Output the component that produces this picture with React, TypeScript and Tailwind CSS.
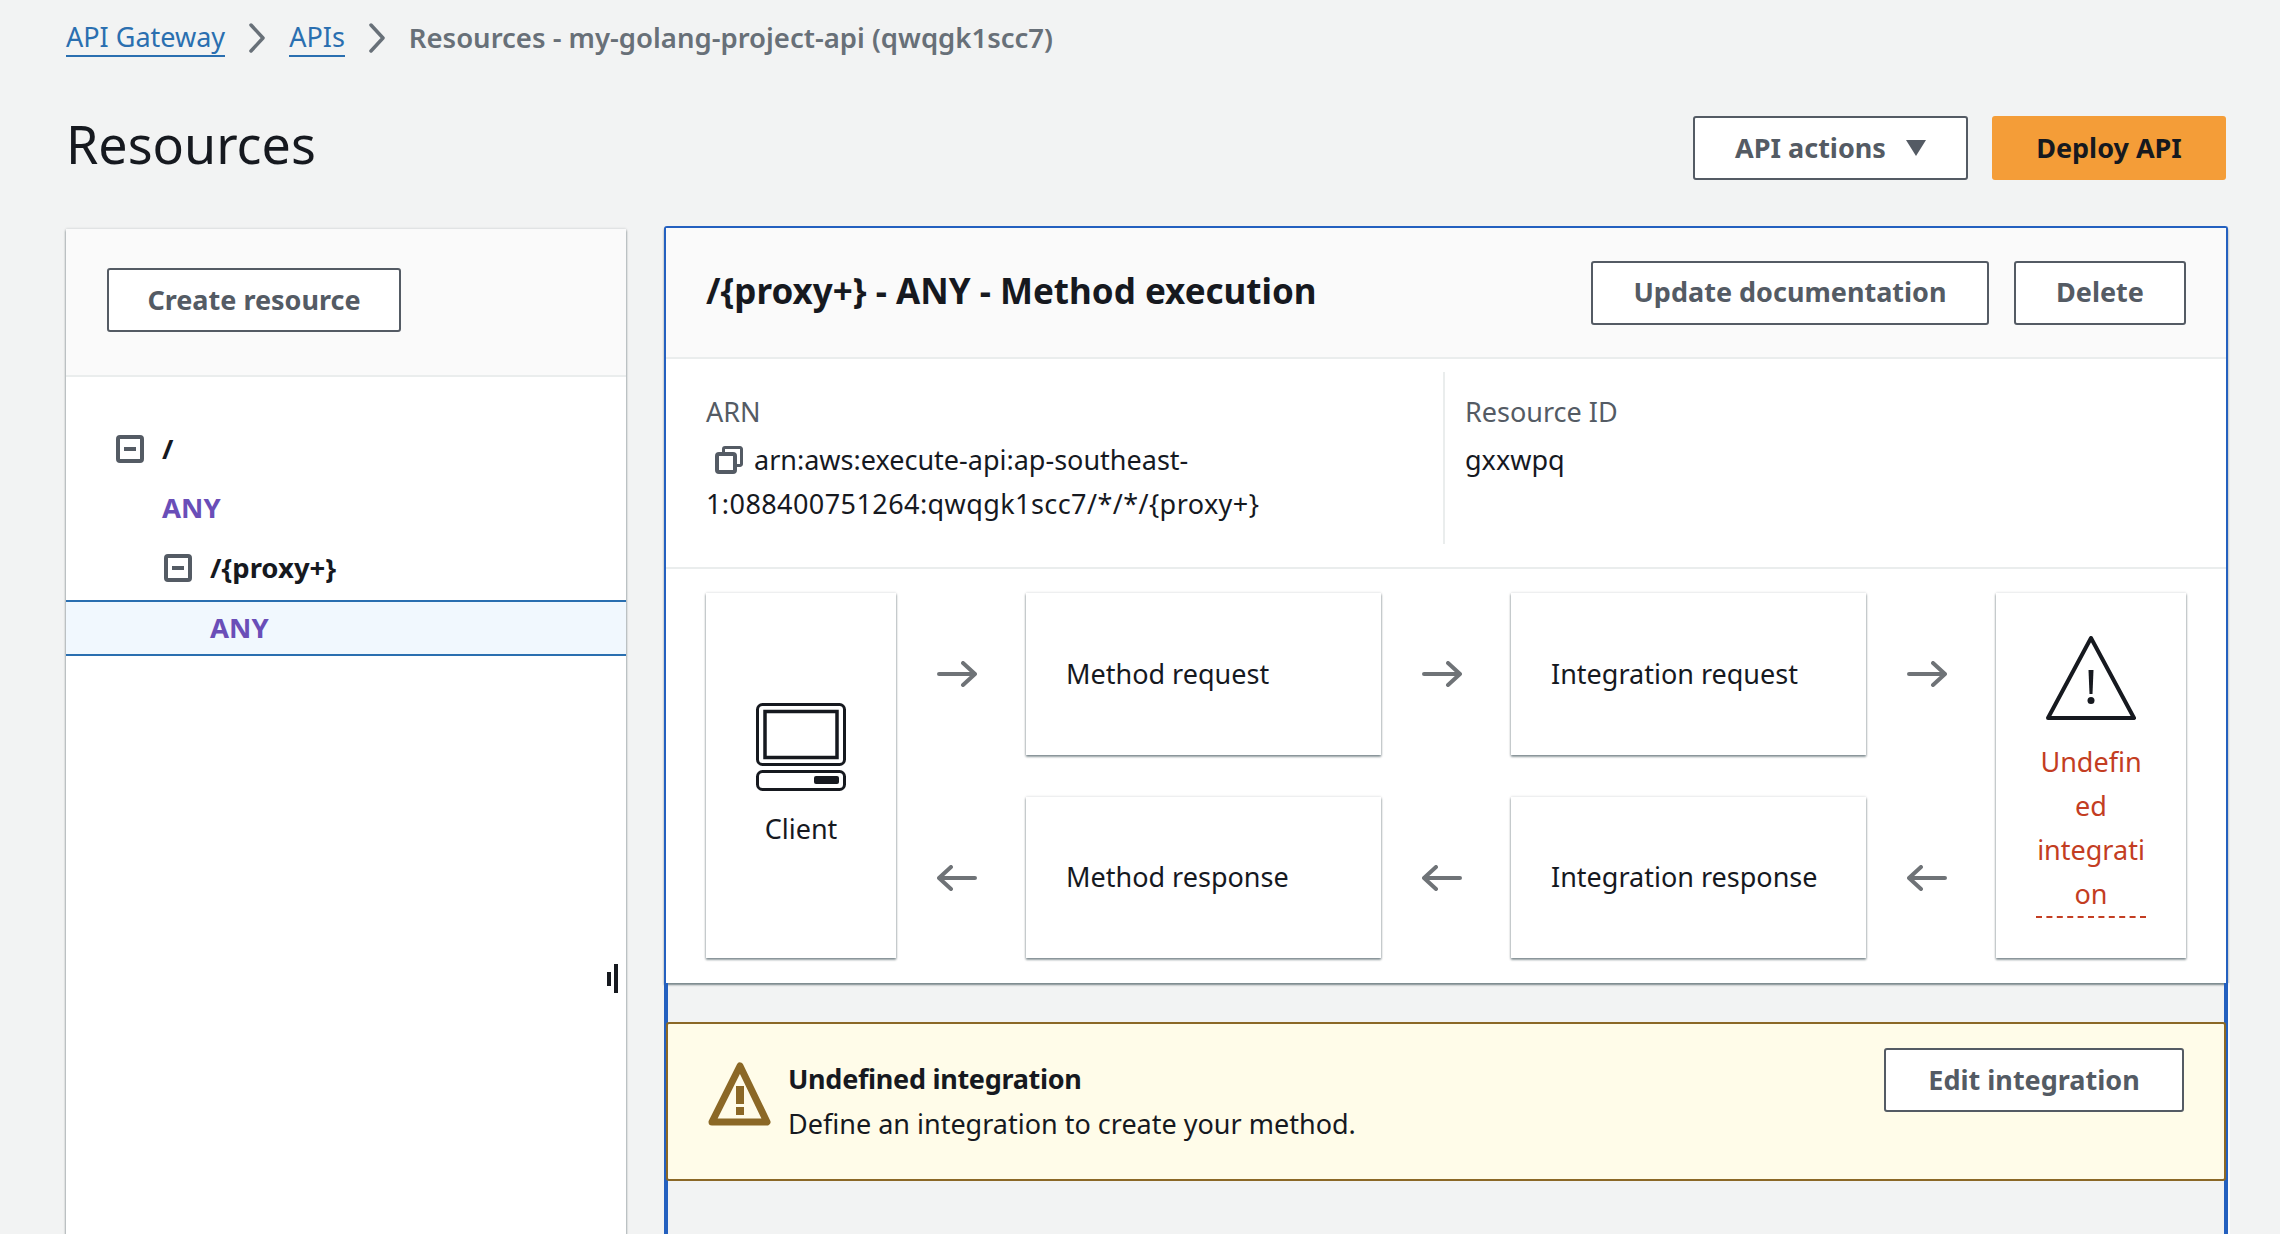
const font = "font-['Noto_Sans',sans-serif]";
const cardShadow =
  "shadow-[0_2px_2px_0_rgba(0,28,36,0.35),1px_1px_2px_0_rgba(0,28,36,0.15),-1px_1px_2px_0_rgba(0,28,36,0.15),0_-1px_2px_0_rgba(0,28,36,0.08)]";

function Button({ label, className = "" }: { label: string; className?: string }) {
  return (
    <button className={`flex h-[64px] items-center justify-center rounded-[3px] border-2 border-[#545b64] bg-white text-[27px] font-bold text-[#545b64] ${className}`}>
      {label}
    </button>
  );
}

function Chevron() {
  return (
    <svg width="18" height="30" viewBox="0 0 18 30" fill="none" stroke="#687078" strokeWidth="3.5" strokeLinecap="round" strokeLinejoin="round">
      <path d="M3 2l12 13L3 28" />
    </svg>
  );
}

function MinusBox() {
  return (
    <svg width="28" height="28" viewBox="0 0 28 28" className="shrink-0">
      <rect x="2" y="2" width="24" height="24" rx="2" fill="none" stroke="#545b64" strokeWidth="4" />
      <rect x="8" y="12" width="12" height="4" fill="#545b64" />
    </svg>
  );
}

function Arrow({ left = false }: { left?: boolean }) {
  return (
    <div className="flex items-center pl-[41px]">
      <svg width="40" height="26" viewBox="0 0 40 26" fill="none" stroke="#6f7377" strokeWidth="4" strokeLinecap="round" strokeLinejoin="round">
        {left ? <path d="M38 13H2M14 2L2 13l12 11" /> : <path d="M2 13h36M26 2l12 11-12 11" />}
      </svg>
    </div>
  );
}

function StepCard({ label }: { label: string }) {
  return (
    <div className={`flex items-center bg-white pl-[40px] text-[27px] text-[#16191f] ${cardShadow}`}>
      {label}
    </div>
  );
}

function CopyIcon() {
  return (
    <svg width="28" height="28" viewBox="0 0 28 28" fill="none" stroke="#545b64" className="ml-[9px] mr-[11px] inline-block align-[-4px]">
      <rect x="2" y="8" width="18" height="18" rx="2" strokeWidth="4" />
      <path d="M8.5 6V3a1.5 1.5 0 0 1 1.5-1.5h15A1.5 1.5 0 0 1 26.5 3v15a1.5 1.5 0 0 1-1.5 1.5h-3" strokeWidth="3" />
    </svg>
  );
}

function ComputerIcon() {
  return (
    <svg width="90" height="88" viewBox="0 0 90 88" fill="none" stroke="#16191f">
      <rect x="1.5" y="1.5" width="87" height="60" rx="5" strokeWidth="3" />
      <rect x="9" y="8.5" width="72" height="46" strokeWidth="3.5" />
      <rect x="1.5" y="68.5" width="87" height="18" rx="5" strokeWidth="3" />
      <rect x="58" y="73" width="25" height="8" rx="2" fill="#16191f" stroke="none" />
    </svg>
  );
}

function WarningOutline() {
  return (
    <svg width="90" height="84" viewBox="0 0 90 84" fill="none">
      <path d="M45 2L88 82H2Z" stroke="#16191f" strokeWidth="4" strokeLinejoin="round" />
      <path d="M42.5 34h5L46.5 58h-3Z" fill="#16191f" />
      <circle cx="45" cy="64.5" r="3.5" fill="#16191f" />
    </svg>
  );
}

function WarningSolid() {
  return (
    <svg width="63" height="64" viewBox="0 0 63 64" fill="none" className="shrink-0">
      <path d="M32 4L59 60H4Z" stroke="#8b6826" strokeWidth="7" strokeLinejoin="round" />
      <rect x="28" y="24" width="8" height="18" fill="#8b6826" />
      <rect x="28" y="45" width="8" height="8" fill="#8b6826" />
    </svg>
  );
}

function TreePanel() {
  return (
    <aside className={`mt-[3px] h-[1100px] w-[560px] shrink-0 bg-white ${cardShadow}`}>
      <div className="h-[148px] border-b-2 border-[#eaeded] bg-[#fafafa] pl-[41px] pt-[39px]">
        <Button label="Create resource" className="w-[294px]" />
      </div>
      <div className="relative h-[952px] pt-[58px]">
        <div className="flex h-[28px] items-center gap-[18px] pl-[50px] text-[27.5px] font-bold text-[#16191f]">
          <MinusBox />
          /
        </div>
        <div className="mt-[31px] h-[28px] pl-[96px] text-[27.5px] font-bold leading-[28px] text-[#6a4eb8]">ANY</div>
        <div className="mt-[32px] flex h-[28px] items-center gap-[18px] pl-[98px] text-[27.5px] font-bold text-[#16191f]">
          <MinusBox />
          {"/{proxy+}"}
        </div>
        <div className="mt-[18px] flex h-[56px] items-center border-y-2 border-[#2a6fb0] bg-[#f1f8fe] pl-[144px] text-[27.5px] font-bold text-[#6a4eb8]">
          ANY
        </div>
        <div className="absolute left-[541px] top-[595px] h-[14px] w-[4px] bg-[#16191f]" />
        <div className="absolute left-[548px] top-[587px] h-[29px] w-[4px] bg-[#16191f]" />
      </div>
    </aside>
  );
}

function MethodPanel() {
  return (
    <section className="flex w-[1564px] shrink-0 flex-col">
      <div className="rounded-t-[3px] border-x-2 border-t-2 border-[#2460bf] bg-white shadow-[0_2px_2px_0_rgba(0,28,36,0.5)]">
        <div className="flex h-[131px] items-center justify-between border-b-2 border-[#eaeded] bg-[#fafafa] pl-[40px] pr-[40px]">
          <h2 className="-mt-[3px] text-[35px] font-bold text-[#16191f]">{"/{proxy+} - ANY - Method execution"}</h2>
          <div className="flex gap-[25px]">
            <Button label="Update documentation" className="w-[398px]" />
            <Button label="Delete" className="w-[172px]" />
          </div>
        </div>
        <div className="flex h-[210px] border-b-2 border-[#eaeded] pt-[13px] text-[27px] text-[#16191f]">
          <div className="h-[172px] w-[779px] border-r-2 border-[#eaeded] pl-[40px] pr-[10px] pt-[18px] leading-[44px]">
            <div className="text-[#545b64]">ARN</div>
            <div className="mt-[4px]">
              <CopyIcon />
              arn:aws:execute-api:ap-southeast-
              <span className="tracking-[0.42px]">1:088400751264:qwqgk1scc7/*/*/{"{proxy+}"}</span>
            </div>
          </div>
          <div className="pl-[20px] pt-[18px] leading-[44px]">
            <div className="text-[#545b64]">Resource ID</div>
            <div className="mt-[4px]">gxxwpq</div>
          </div>
        </div>
        <div className="grid grid-cols-[190px_130px_355px_130px_355px_130px_190px] grid-rows-[162px_161px] gap-y-[42px] pb-[25px] pl-[40px] pt-[24px]">
          <div className={`row-span-2 flex flex-col items-center bg-white pt-[110px] text-[27px] text-[#16191f] ${cardShadow}`}>
            <ComputerIcon />
            <div className="mt-[18px]">Client</div>
          </div>
          <Arrow />
          <StepCard label="Method request" />
          <Arrow />
          <StepCard label="Integration request" />
          <Arrow />
          <div className={`row-span-2 flex flex-col items-center bg-white pt-[43px] text-[27px] leading-[44px] text-[#c33d22] ${cardShadow}`}>
            <WarningOutline />
            <div className="mt-[20px] w-[110px] border-b-2 border-dashed border-[#c33d22] text-center wrap-anywhere">
              Undefined integration
            </div>
          </div>
          <Arrow left />
          <StepCard label="Method response" />
          <Arrow left />
          <StepCard label="Integration response" />
          <Arrow left />
        </div>
      </div>
      <div className="flex-1 border-x-4 border-[#2460bf] pt-[39px] shadow-[2px_0_0_0_rgba(255,255,255,0.7)]">
        <div className="-mx-[2px] flex h-[159px] items-start justify-between rounded-[3px] border-2 border-[#8b6826] bg-[#fffce9] pl-[40px] pr-[40px] pt-[24px]">
          <div className="flex gap-[17px] pt-[14px]">
            <WarningSolid />
            <div className="-mt-[6px] text-[27px] leading-[45px] text-[#16191f]">
              <div className="font-bold tracking-[-0.3px]">Undefined integration</div>
              <div>Define an integration to create your method.</div>
            </div>
          </div>
          <Button label="Edit integration" className="w-[300px]" />
        </div>
      </div>
    </section>
  );
}

export default function App() {
  return (
    <div className={`h-[1234px] overflow-hidden bg-[#f2f3f3] pl-[66px] ${font}`}>
      <nav className="flex h-[76px] items-center text-[27px]">
        <a className="border-b-2 border-[#2a6fb0] leading-[36px] text-[#2a6fb0]">API Gateway</a>
        <span className="mx-[23px]"><Chevron /></span>
        <a className="border-b-2 border-[#2a6fb0] leading-[36px] text-[#2a6fb0]">APIs</a>
        <span className="mx-[23px]"><Chevron /></span>
        <span className="text-[27.5px] font-semibold text-[#687078]">Resources - my-golang-project-api (qwqgk1scc7)</span>
      </nav>
      <header className="mt-[40px] flex h-[64px] items-center justify-between pr-[54px]">
        <h1 className="-mt-[8px] text-[52px] text-[#16191f]">Resources</h1>
        <div className="flex gap-[24px]">
          <button className="flex h-[64px] w-[275px] items-center justify-center gap-[20px] rounded-[3px] border-2 border-[#545b64] bg-white text-[27px] font-bold text-[#545b64]">
            API actions
            <svg width="20" height="16" viewBox="0 0 20 16"><path d="M0 0h20L10 16Z" fill="#545b64" /></svg>
          </button>
          <button className="flex h-[64px] w-[234px] items-center justify-center rounded-[3px] bg-[#f49d38] text-[27px] font-bold text-[#16191f]">
            Deploy API
          </button>
        </div>
      </header>
      <main className="mt-[46px] flex gap-[38px]">
        <TreePanel />
        <MethodPanel />
      </main>
    </div>
  );
}
